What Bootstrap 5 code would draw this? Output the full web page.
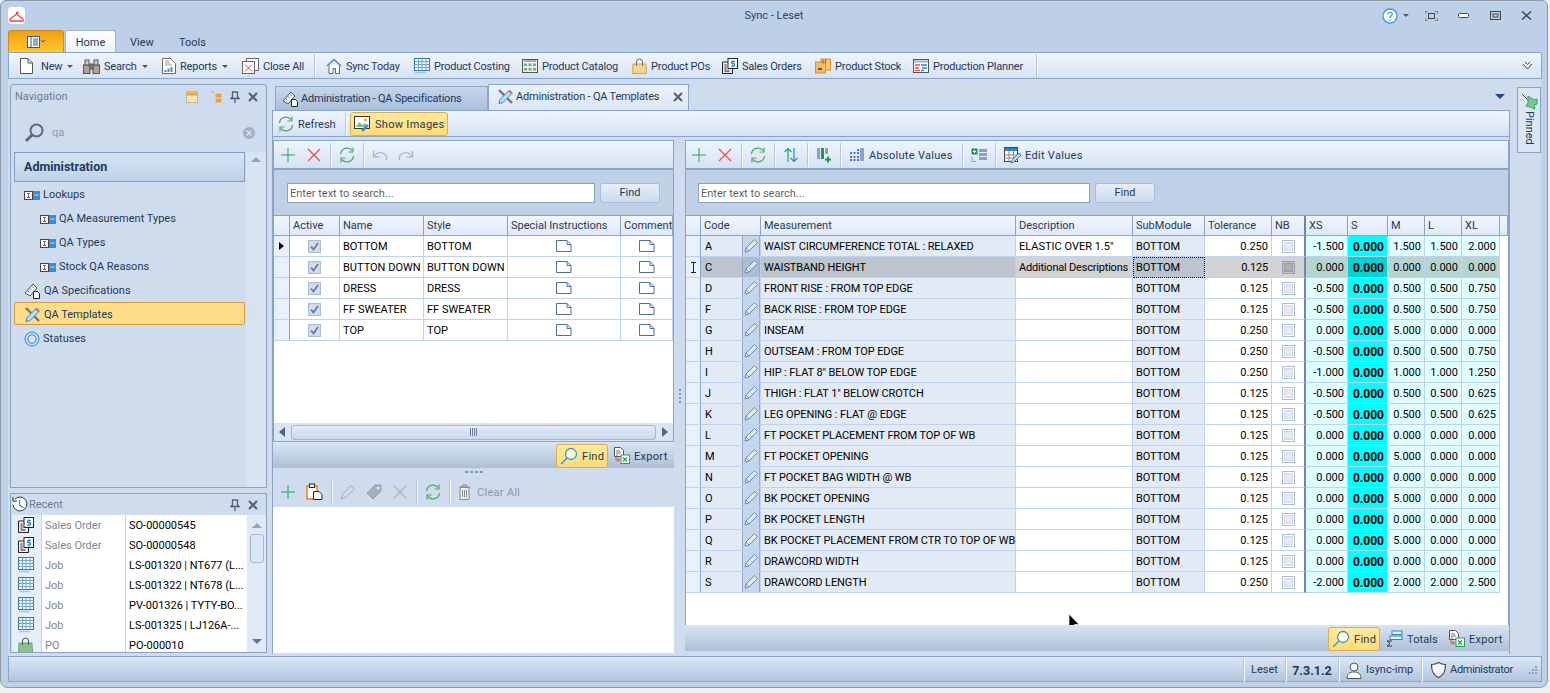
<!DOCTYPE html>
<html lang="en"><head><meta charset="utf-8"><title>Sync - Leset</title>
<link href="https://cdn.jsdelivr.net/npm/bootstrap@5.3.0/dist/css/bootstrap.min.css" rel="stylesheet">
<style>
html,body{margin:0;height:693px;overflow:hidden;background:#efefef}
body{font:11px/1.2 Roboto,"Noto Sans","Liberation Sans",sans-serif;color:#1e395b}
svg{flex:none;display:block}
.appwin{width:1548px;height:688px;background:#bed0e7;border:1px solid #8d99a8;border-radius:6px 6px 8px 8px;position:relative;overflow:hidden}
.titlerow{height:29px;position:relative}
.apptitle{width:100%;text-align:center;padding-top:8px;color:#2c4468}
.applogo{position:absolute;left:7px;top:6px;width:17px;height:17px;background:#fff;border-radius:4px}
.winctl{position:absolute;right:15px;top:0;height:29px}
.g4{margin-left:4px}.g16{margin-left:16px}.g20{margin-left:20px}.g21{margin-left:21px}
.tabrow{height:22px;padding-left:7px}
.appbtn{width:56px;height:22px;background:linear-gradient(#f29f12,#ffc92e);border:1px solid #d88a10;border-bottom:0;border-radius:3px 3px 0 0}
.rtab{height:22px;line-height:26px;color:#1e395b}
.rtab-on{width:51px;text-align:center;background:linear-gradient(#fff,#edf3fc);border:1px solid #9db4d3;border-bottom:0;border-radius:3px 3px 0 0;margin-left:1px;line-height:23px}
.rtab-v{width:49px;margin-left:14px}
.ribbon{height:27px;width:1534px;margin-left:7px;border:1px solid #8aa4c6;border-radius:2px 2px 0 0;background:linear-gradient(#f0f5fd,#d6e2f2);padding-left:11px}
.rbi{height:25px;white-space:nowrap;padding-top:1px;letter-spacing:-.2px}
.rbi span:not(.caret1){padding-top:2px}
.rbi svg{margin-right:4px}
.rw1{width:63px}.rw2{width:79px}.rw3{width:80px}.rw4{width:72px}.rw5{width:88px}.rw6{width:108px}.rw7{width:110px}.rw8{width:90px}.rw9{width:93px}.rw10{width:98px}.rw11{width:123px}
.caret1{width:0;height:0;border:3px solid transparent;border-top:3px solid #555;border-bottom:0;margin-left:5px}
.vsep{width:1px;height:24px;background:#b4c5dd;box-shadow:1px 0 #f4f8fe}
.sepr{margin-right:11px}
.band{height:577px;width:1533px;margin-left:7px;background:#cfdcee}
.leftcol{width:257px;margin-left:2px;padding-top:5px}
.nav-pane{height:404px;border:1px solid #8ba2c1;border-radius:3px 3px 0 0;background:#cfdcee;position:relative}
.panehd{height:22px;padding:1px 4px 0}
.panehd-r{height:21px;padding:0 4px 0 1px}
.panehd-t{color:#6c7c93}
.navbody{width:235px;padding-left:3px}
.navsearch{height:45px;padding:6px 0 0 10px;width:241px;position:relative;z-index:2}
.navgroup{height:30px;width:231px;border:1px solid #7f9fc6;background:linear-gradient(#d5e3f3,#bdd2ea);font-size:12.5px;font-weight:700;line-height:28px;padding-left:9px;color:#1e395b}
.navitem{height:24px;width:231px;padding:2px 0 0 10px;white-space:nowrap}
.navitem svg{margin-right:3px}
.navsub{padding-left:26px}
.navitem-on{background:#fedd88;border:1px solid #d89a3e;border-radius:2px;height:23px;margin:0 0 1px;padding-left:9px}
.vscroll{position:absolute;right:0;top:67px;bottom:0;width:20px;background:#d9e4f2;padding-top:5px}
.arrowup{width:0;height:0;border:5px solid transparent;border-bottom:5px solid #8ea3bf;border-top:0}
.arrowdn{width:0;height:0;border:5px solid transparent;border-top:5px solid #5f7593;border-bottom:0}
.rec-pane{height:160px;margin-top:5px;border:1px solid #8ba2c1;background:#cfdcee;overflow:hidden;position:relative}
.rec-grid{width:235px;margin-left:1px;background:#fff;height:138px;overflow:hidden}
.rec-row{height:20px;line-height:22px;white-space:nowrap;overflow:hidden}
.rec-i{width:30px;background:#e6eef9;border-right:1px solid #c2d3eb;height:20px;padding:2px 0 0 6px}
.rec-t{width:84px;color:#7e8793;border-right:1px solid #c2d3eb;padding-left:3px}
.rec-v{width:120px;color:#000;padding-left:3px;overflow:hidden}
.recscroll{position:absolute;right:0;top:21px;bottom:0;width:19px;background:#e0e9f5}
.thumb1{width:14px;height:29px;margin:6px auto 0;border:1px solid #9fb9da;border-radius:3px;background:#dbe7f6}
.centercol{width:1238px;margin-left:5px;padding-top:5px}
.doctabs{height:26px;position:relative}
.dtab{height:24px;width:213px;margin:2px 0 0 3px;background:linear-gradient(#c6d6ea,#a8bfdc);border:1px solid #8ba6c8;border-bottom:0;padding:0 0 0 6px;white-space:nowrap;letter-spacing:-.2px}
.dtab svg{margin-right:2px}
.dtab-on{height:26px;width:201px;background:linear-gradient(#eaf1fb,#dbe6f5);margin:0;padding:0 0 1px 8px}
.dtab-on .xbtn{margin-left:auto;margin-right:5px}
.dmenu{position:absolute;right:5px;top:10px;width:0;height:0;border:5px solid transparent;border-top:5px solid #23439b;border-bottom:0}
.docbox{height:544px;border:1px solid #8aa4c6;border-bottom:0}
.tb-main{height:26px;border-bottom:1px solid #8aa4c6;background:linear-gradient(#f0f5fd,#d6e2f2);padding:1px 0 0 5px}
.tbtxt{white-space:nowrap;padding-top:2px;letter-spacing:.3px}
.wref{width:39px;letter-spacing:0}.wabs{width:85px}.wexp{width:34px}.wtot{width:31px;letter-spacing:.1px}
.hlbtn{background:linear-gradient(#ffeaa0,#ffdc72);border:1px solid #dcae50;border-radius:3px;height:24px;white-space:nowrap;padding:0 3px;color:#1e395b}
.hlimg{width:98px;margin-left:4px}
.hlfind{width:52px}
.g5{margin-left:5px}.g6{margin-left:6px}.g7{margin-left:7px}.g10{margin-left:10px}
.panels{height:518px;padding-top:3px}
.lpane{width:401px;flex:none}
.rpane{width:824px;flex:none}
.gsplit{width:11px;flex:none;padding-top:249px}
.dotv{width:2px;height:2px;background:#7f97b8;margin:0 auto 2px}
.tb-sub{height:30px;background:linear-gradient(#eef4fd,#d5e2f3);border:1px solid #8aa4c6;border-bottom:2px solid #8aa4c6;padding:1px 0 0 6px}
.tb-r{padding-left:5px}
.tsep{width:1px;height:24px;margin-left:8px;background:#b7c7de;box-shadow:1px 0 #f4f8fe}
.searchbox{height:45px;padding-top:1px;background:#bfd0e7;border-left:1px solid #8aa4c6;border-right:1px solid #8aa4c6}
.qinput.form-control{height:20px;min-height:20px;padding:0 2px;border:1px solid #8ba2c1;border-radius:0;font-size:11px;line-height:18px;color:#7c8794;background:#fff}
.qinput-l{width:308px;margin-left:13px}
.qinput-r{width:392px;margin-left:12px}
.qfind.btn{width:60px;height:20px;padding:0;margin-left:5px;font-size:11px;line-height:18px;color:#1e395b;border:1px solid #a9bcd6;border-radius:3px;background:linear-gradient(#e7effa,#ccdaed)}
.gridwrap{background:#fff;border-left:1px solid #8aa4c6;border-right:1px solid #8aa4c6;border-top:1px solid #8aa4c6;position:relative;overflow:hidden}
.qgrid.table{table-layout:fixed;margin:0;--bs-table-bg:transparent;border-collapse:separate;border-spacing:0;font-size:11px}
.qgrid-l.table{width:399px}
.qgrid-r.table{width:822px}
.qgrid.table th,.qgrid.table td{padding:2px 3px 0;height:21px;line-height:18px;white-space:nowrap;overflow:hidden;border:0;border-right:1px solid #bdd3f1;border-bottom:1px solid #bdd3f1;color:#000;font-weight:400;box-shadow:none;vertical-align:middle}
.qgrid.table th{padding:0 3px;height:20px;line-height:19px;background:linear-gradient(#f2f6fd,#dfe9f7);color:#1e395b;border-right:1px solid #8aa4c6;border-bottom:1px solid #8aa4c6}
.qgrid.table td.ind{background:#e8f0fb;border-right:1px solid #8aa4c6;padding:0}
.qgrid.table td.ro{background:#e2eaf5;letter-spacing:-.1px}
.qgrid.table td.num{text-align:right}
.qgrid.table td.ctr{padding:0}
.qgrid.table td.sz{background:#e0fdff;text-align:right}
.qgrid.table td.szs{background:#0ff;text-align:right;font-weight:700;font-size:12px}
.qgrid.table td.nbc{border-right:2px solid #6f87a8;padding:0}
.qgrid.table th.nbh{border-right:2px solid #6f87a8}
.qgrid.table td.cod{padding:0;background:#e2eaf5}
.qgrid.table td.fill{border:0;background:#fff}
.qgrid.table tr.sel td.ro,.qgrid.table tr.sel td.cod{background:#bcc4ce}
.qgrid.table tr.sel td.ed{background:#d3d3d3;letter-spacing:-.2px}
.qgrid.table tr.sel td.sz{background:#b8d4d0}
.qgrid.table tr.sel td.szs{background:#00d3d3}
.qgrid.table td.foc{outline:1px dotted #000;outline-offset:-1px}
.codetx{padding:2px 0 0 4px}
.penbtn{width:18px;height:20px;background:#c7d5e8;border-left:1px solid #93aac8;border-right:1px solid #93aac8}
.sel .penbtn{background:#aebccd}
.c0{width:16px}.c1{width:50px}.c2{width:84px}.c3{width:84px}.c4{width:113px}.c5{width:52px}
.d0{width:15px}.d1{width:60px}.d2{width:255px}.d3{width:117px}.d4{width:72px}.d5{width:67px}.d6{width:34px}.d7{width:42px}.d8{width:40px}.d9{width:37px}.d10{width:37px}.d11{width:38px}.d12{width:8px}
.lgrid{height:208px}
.hscroll{height:19px;background:#d9e5f4;border:1px solid #8aa4c6;border-top:0;padding:0 5px}
.hthumb{height:15px;flex:1;margin:0 6px;border:1px solid #9fb9da;border-radius:3px;background:linear-gradient(#e3edf9,#c8d8ec)}
.tinyarrowl{width:0;height:0;border:5px solid transparent;border-right:6px solid #4e6588;border-left:0}
.tinyarrowr{width:0;height:0;border:5px solid transparent;border-left:6px solid #4e6588;border-right:0}
.ftbar{height:26px;background:linear-gradient(#d9e5f4,#aebfd5);padding:1px 6px 0 0}
.hsplit{height:8px}
.doth{width:3px;height:2px;background:#7f97b8;margin:0 1px}
.tb-low{height:31px;padding-left:7px}
.lowwhite{height:146px;background:#fff}
.rgrid{height:410px}
.graytx{color:#8b98a8}
.railtab{width:24px;height:66px;margin:8px 0 0 7px;border:1px solid #8aa4c6;background:#dbe6f5;padding-top:5px}
.vtxt{writing-mode:vertical-rl;margin-top:1px}
.statusbar{height:26px;width:1534px;margin-left:7px;border:1px solid #8aa4c6;background:linear-gradient(#dce7f5,#b3c5dc);padding-top:2px}
.stt{white-space:nowrap}
.st1{width:41px;text-align:center}.st2{width:52px;text-align:center;font-size:12.5px}.st3{width:82px;padding-left:7px}.st4{width:119px;padding-left:9px;letter-spacing:-.3px}
.mousep{left:382px;top:397px}
</style></head><body>
<svg width="0" height="0" class="position-absolute"><defs>
<symbol id="i-plus" viewBox="0 0 16 16"><path d="M8 1v14M1 8h14" stroke="#1fa84f" fill="none"/></symbol>
<symbol id="i-x" viewBox="0 0 16 16"><path d="M2 2l12 12M14 2L2 14" stroke="#ee4b4b" stroke-width="1.2" fill="none"/></symbol>
<symbol id="i-xg" viewBox="0 0 16 16"><path d="M2 2l12 12M14 2L2 14" stroke="#a9b1bb" stroke-width="1.1" fill="none"/></symbol>
<symbol id="i-ref" viewBox="0 0 16 16"><path d="M1.500 7A6.500 6.500 0 0 1 13 3.500M14.500 9A6.500 6.500 0 0 1 3 12.500" stroke="#4fa85e" stroke-width="1.3" fill="none"/><path d="M14 .5v4.500h-4.500M2 15.500V11h4.500" stroke="#4fa85e" stroke-width="1.200" fill="none"/></symbol>
<symbol id="i-undo" viewBox="0 0 16 16"><path d="M1.500 4v6h6M2 9.500C4 5 12 4 14.500 9.500V13" stroke="#a6afba" stroke-width="1.200" fill="none"/></symbol>
<symbol id="i-redo" viewBox="0 0 16 16"><path d="M14.500 4v6h-6M14 9.500C12 5 4 4 1.500 9.500V13" stroke="#a6afba" stroke-width="1.200" fill="none"/></symbol>
<symbol id="i-note" viewBox="0 0 16 12"><path d="M.5 .5h10.500l4 4v7H.5z" fill="#fff" stroke="#4a6ea8"/><path d="M11 .5v4h4" fill="none" stroke="#4a6ea8"/></symbol>
<symbol id="i-pen" viewBox="0 0 16 16"><path d="M2 14l1-4 8.500-8.500 3 3L6 13z" fill="#dfe9f6" stroke="#5f8fc6"/><path d="M3 10l3 3" stroke="#5f8fc6"/></symbol>
<symbol id="i-peng" viewBox="0 0 16 16"><path d="M1 15l1.500-4.500 8.500-9 3.500 3.500-9 8.500z" fill="#d6dbe2" stroke="#a3abb6"/></symbol>
<symbol id="i-tag" viewBox="0 0 16 16"><path d="M1 9l8-8h6v6l-8 8z" fill="#a9b0ba" stroke="#969ea9"/><circle cx="12" cy="4" r="1.300" fill="#e6ebf2"/></symbol>
<symbol id="i-chk" viewBox="0 0 13 13"><rect x=".5" y=".5" width="12" height="12" fill="#dce4ef" stroke="#a9bdd8"/><rect x="1.500" y="1.500" width="10" height="10" fill="#d5dde8" stroke="#c6d2e2" stroke-width=".5"/><path d="M3 6.500l2.500 3L10 3" fill="none" stroke="#5f7fa5" stroke-width="1.800"/></symbol>
<symbol id="i-unc" viewBox="0 0 13 13"><rect x=".5" y=".5" width="12" height="12" fill="#fff" stroke="#a9bdd8"/><rect x="2.500" y="2.500" width="8" height="8" fill="#e7e9ec" stroke="#d5d9df"/></symbol>
<symbol id="i-uns" viewBox="0 0 13 13"><rect x=".5" y=".5" width="12" height="12" fill="#c4c4c4" stroke="#8ea2bd"/><rect x="2.500" y="2.500" width="8" height="8" fill="#adadad" stroke="#9c9c9c"/></symbol>
<symbol id="i-x2" viewBox="0 0 10 10"><path d="M1 1l8 8M9 1L1 9" stroke="#4e5f78" stroke-width="2" fill="none"/></symbol>
<symbol id="i-lk" viewBox="0 0 16 9"><rect x=".5" y=".5" width="8" height="8" fill="#f4f4f4" stroke="#444"/><path d="M3 2.500h3M4.500 2.500v4M3 6.500h3" stroke="#555" stroke-width=".8" fill="none"/><rect x="9" y="0" width="7" height="9" fill="#3a8fd0"/><path d="M10.500 3l2 2 2-2" stroke="#dcecf8" fill="none"/></symbol>
<symbol id="i-qas" viewBox="0 0 17 16"><path d="M1 10L9 1l4 4-7 8z" fill="#e9edf3" stroke="#4d5866"/><path d="M4 8l1 1M6 5.500l1 1M8.500 3.500l1 1" stroke="#4d5866"/><path d="M9.500 8.500h4l2 2v5h-6z" fill="#fff" stroke="#222"/></symbol>
<symbol id="i-qat" viewBox="0 0 17 16"><path d="M2 1l13 13" stroke="#777" stroke-width="2.400"/><path d="M2 14.500l1-4L12 1.500l3 3-9 9z" fill="#bcdcf5" stroke="#3a87c9"/><path d="M12 1.500l3 3" stroke="#e9555f" stroke-width="1.800"/></symbol>
<symbol id="i-stat" viewBox="0 0 16 16"><circle cx="8" cy="8" r="7" fill="#bfe0f7" stroke="#2b86c8"/><circle cx="8" cy="8" r="4.200" fill="#d8e4f2" stroke="#2b86c8"/></symbol>
<symbol id="i-mag" viewBox="0 0 20 20"><circle cx="12.500" cy="7.500" r="6" fill="none" stroke="#5a6b80" stroke-width="2"/><path d="M8 12l-6 6" stroke="#5a6b80" stroke-width="3"/></symbol>
<symbol id="i-mag2" viewBox="0 0 18 18"><circle cx="11" cy="7" r="5.500" fill="#fff9d8" stroke="#2b9bdc" stroke-width="1.300"/><path d="M7 11l-6 6" stroke="#2b9bdc" stroke-width="1.500"/></symbol>
<symbol id="i-exp" viewBox="0 0 17 17"><path d="M1.500 .5h6l3 3v6h-9z" fill="#fff" stroke="#555"/><path d="M3 4h4M3 6h5M3 8h2" stroke="#777"/><path d="M3 10v3h3M4.500 15l2-2-2-2" stroke="#e24b4b" fill="none"/><rect x="8" y="8" width="8.500" height="8.500" fill="#fff" stroke="#22a350"/><path d="M10 10.500l4 4M14 10.500l-4 4" stroke="#22a350" stroke-width="1.300"/></symbol>
<symbol id="i-tot" viewBox="0 0 17 17"><rect x="6" y="1" width="10" height="3.500" fill="#e6f2fc" stroke="#2b86c8"/><rect x="4" y="6" width="12" height="3.500" fill="#e6f2fc" stroke="#2b86c8"/><path d="M6 11H1l3 2.500L1 16h5" fill="none" stroke="#333"/></symbol>
<symbol id="i-new" viewBox="0 0 13 16"><path d="M.5 .5h7.500l4.500 4.500v10.500H.5z" fill="#fff" stroke="#555"/><path d="M8 .5V5h4.500" fill="none" stroke="#555"/></symbol>
<symbol id="i-bin" viewBox="0 0 17 15"><rect x=".5" y="6" width="6.500" height="8.500" fill="#aaa397" stroke="#555"/><rect x="10" y="6" width="6.500" height="8.500" fill="#aaa397" stroke="#555"/><rect x="2" y="1" width="4" height="5" fill="#cfcabf" stroke="#555"/><rect x="11" y="1" width="4" height="5" fill="#cfcabf" stroke="#555"/><rect x="7" y="5" width="3" height="5" fill="#8b857a" stroke="#555"/></symbol>
<symbol id="i-rep" viewBox="0 0 14 16"><path d="M.5 .5h8l5 5v10H.5z" fill="#fff" stroke="#666"/><path d="M3 3h4M3 5h5M3 7h7" stroke="#999"/><path d="M3.500 14v-2M6.500 14v-3.500M9.500 14V9" stroke="#3a8fd0" stroke-width="2"/></symbol>
<symbol id="i-cls" viewBox="0 0 17 16"><rect x="4.500" y=".5" width="12" height="12" fill="#fff" stroke="#666"/><rect x=".5" y="3.500" width="12" height="12" fill="#fff" stroke="#666"/><path d="M3 6.500l7 7M10 6.500l-7 7" stroke="#e24b4b"/></symbol>
<symbol id="i-home" viewBox="0 0 16 16"><path d="M1 8l7-6.500L15 8" fill="none" stroke="#3a8fd0" stroke-width="1.500"/><path d="M3 7.500v8h4v-5h2.500v5h4v-8" fill="#fff" stroke="#666"/></symbol>
<symbol id="i-grid" viewBox="0 0 16 16"><rect x=".5" y=".5" width="15" height="12" fill="#f3f8fd" stroke="#2f78b0"/><path d="M.5 3.500h15M.5 6.500h15M.5 9.500h15M4.500 .5v12M8 .5v12M12 .5v12" stroke="#6ea4cf"/><path d="M1 14.500h11" stroke="#9cc6e6" stroke-width="1.500"/></symbol>
<symbol id="i-cat" viewBox="0 0 16 16"><rect x=".5" y="1.500" width="15" height="13" fill="#eef0ef" stroke="#555"/><path d="M2 3h12" stroke="#999" stroke-width="1.500"/><path d="M2 5.500h3v2.500H2zM6.500 5.500h3v2.500h-3zM11 5.500h3v2.500h-3zM2 10h3v2.500H2zM6.500 10h3v2.500h-3zM11 10h3v2.500h-3z" fill="#6fae86"/></symbol>
<symbol id="i-bag" viewBox="0 0 15 16"><path d="M1 6h13l.500 9.500H.5z" fill="#f0d68c" stroke="#c4a965"/><path d="M4.500 8V4a3 3 0 0 1 6 0v4" fill="none" stroke="#7d6b3e"/></symbol>
<symbol id="i-bagg" viewBox="0 0 15 16"><path d="M1 6h13l.500 10H.5z" fill="#8cc08f" stroke="#6fa274"/><path d="M4.500 8V4a3 3 0 0 1 6 0v4" fill="none" stroke="#46604c"/></symbol>
<symbol id="i-so" viewBox="0 0 16 16"><rect x="6" y=".5" width="9.500" height="10" fill="#fff" stroke="#222"/><path d="M.5 4h5.500M.5 4v11.500h10v-5" fill="none" stroke="#222"/><path d="M2.500 7h2M2.500 9h2M2.500 11h2M2.500 13h5" stroke="#222"/><path d="M13 3.500h-3.500v2h3v2.500H9M11 2v7.500" stroke="#2b86c8" fill="none"/></symbol>
<symbol id="i-stock" viewBox="0 0 16 16"><rect x="6" y="1" width="9.500" height="11" fill="#f7c878" stroke="#e08e2a"/><rect x=".5" y="4" width="10" height="11" fill="#f4bd62" stroke="#e08e2a"/><path d="M3 11h4" stroke="#555" stroke-width="2"/><path d="M8 1.500v4M10.500 1.500v4" stroke="#666"/></symbol>
<symbol id="i-plan" viewBox="0 0 16 16"><rect x=".5" y="1.500" width="15" height="13" fill="#fff" stroke="#555"/><path d="M1 3.500h14" stroke="#8db6d8" stroke-width="2"/><path d="M2 7h5M2 10h4M2 12.500h5" stroke="#e24b4b" stroke-width="1.500"/><path d="M8 7h6M9 10h5M8 12.500h3" stroke="#2b86c8" stroke-width="1.500"/></symbol>
<symbol id="i-img" viewBox="0 0 17 16"><rect x=".5" y=".5" width="15" height="12" fill="#fff" stroke="#333"/><path d="M1.500 11l4-5 3 3 2-2 4 4z" fill="#7cc08d"/><circle cx="11.500" cy="4" r="1.500" fill="#f2a13b"/><path d="M8 15l6-6" stroke="#3a8fd0" stroke-width="2.500"/></symbol>
<symbol id="i-updn" viewBox="0 0 16 16"><path d="M5 15V1.500M1.500 5L5 1.500 8.500 5" fill="none" stroke="#22a36a" stroke-width="1.200"/><path d="M11 1v13.500M7.500 11l3.500 3.500 3.500-3.500" fill="none" stroke="#2b86c8" stroke-width="1.200"/></symbol>
<symbol id="i-col" viewBox="0 0 16 16"><path d="M1 1h3v11H1zM9 1h3v6H9z" fill="#8ba2c6"/><path d="M5 1h3v11H5z" fill="#1b9a4b"/><path d="M9 12.500h6M12 9.500v6" stroke="#1b9a4b" stroke-width="2"/></symbol>
<symbol id="i-abs" viewBox="0 0 16 16"><path d="M11 1h4v13h-4z" fill="#8ba2c6"/><path d="M1 5h2v2H1zM1 9h2v2H1zM1 12h2v2H1zM4.500 5h2v2h-2zM4.500 9h2v2h-2zM4.500 12h2v2h-2zM8 2h2v2H8zM8 5h2v2H8zM8 9h2v2H8zM8 12h2v2H8z" fill="#4b78c6"/></symbol>
<symbol id="i-rw" viewBox="0 0 16 16"><rect x=".5" y="1.500" width="6" height="6" fill="#1b9a4b"/><path d="M3.500 3v3M2 4.500h3" stroke="#fff"/><path d="M8 2h8v3H8zM8 6h8v3H8zM8 10h8v3H8z" fill="#8ba2c6"/><path d="M1 9.500v5h4" fill="none" stroke="#8ba2c6"/></symbol>
<symbol id="i-edit" viewBox="0 0 17 17"><rect x=".5" y=".5" width="13" height="14" fill="#fff" stroke="#444"/><path d="M1 2.500h12" stroke="#2b86c8" stroke-width="3"/><path d="M.5 8h13M.5 11h13M5 4v10.500M9.500 4v10.500" stroke="#888"/><path d="M7 16l1-3 7-7 2 2-7 7z" fill="#bcdcf5" stroke="#2b86c8"/></symbol>
<symbol id="i-paste" viewBox="0 0 17 17"><rect x="1" y="3" width="10" height="13" fill="#fff" stroke="#ea7d21" stroke-width="1.500"/><rect x="3.500" y="1" width="5" height="3.500" fill="#fff" stroke="#222"/><path d="M7.500 8.500h5.500l3 3v5H7.500z" fill="#fff" stroke="#222"/></symbol>
<symbol id="i-trash" viewBox="0 0 13 16"><path d="M1 3h11M4.500 3V1h4v2" fill="none" stroke="#888"/><path d="M2 3.500h9v12H2z" fill="#eef1f5" stroke="#888"/><path d="M4.500 6v7M6.500 6v7M8.500 6v7" stroke="#888"/></symbol>
<symbol id="i-user" viewBox="0 0 16 17"><circle cx="8" cy="5" r="4" fill="#fff" stroke="#555"/><path d="M1 16.500c0-5 3-6.500 7-6.500s7 1.500 7 6.500z" fill="#fff" stroke="#555"/></symbol>
<symbol id="i-shield" viewBox="0 0 15 16"><path d="M7.500 .5C5 2 3 2.500 .5 2.500c0 6 1 10.500 7 13 6-2.500 7-7 7-13-2.500 0-4.500-.5-7-2z" fill="#f4f6f9" stroke="#444" stroke-width="1.200"/></symbol>
<symbol id="i-clock" viewBox="0 0 17 17"><path d="M3 3a7 7 0 1 1-2 6" fill="#fff" stroke="#333"/><path d="M1 1v4h4" fill="none" stroke="#333"/><path d="M7.500 4v5l4 3" fill="none" stroke="#2b86c8" stroke-width="1.200"/></symbol>
<symbol id="i-pin" viewBox="0 0 10 12"><path d="M2.500 1h5v5l1.500 1.500H1L2.500 6zM5 7.500V12" fill="none" stroke="#4e5f78" stroke-width="1.300"/></symbol>
<symbol id="i-pingreen" viewBox="0 0 17 17"><path d="M1 1l7 7" stroke="#444"/><path d="M7 3l6 4 3-1 0 5-3 1 1 4-5-2-4-1 2-3z" fill="#74cc92" stroke="#3fa064"/></symbol>
</defs></svg>

<div class="appwin">
 <div class="titlerow">
  <div class="applogo d-flex align-items-center justify-content-center"><svg width="15" height="12" viewBox="0 0 15 12"><path d="M7.500 4C7 2 9 1.500 9 3L1 9v2h13V9L7.500 4" fill="none" stroke="#e8494f" stroke-width="1.300"/></svg></div>
  <div class="apptitle">Sync - Leset</div>
  <div class="winctl d-flex align-items-center">
   <svg width="16" height="16" viewBox="0 0 16 16"><circle cx="8" cy="8" r="7" fill="#fff" stroke="#3a9ae0" stroke-width="1.300"/><path d="M5.800 6.200C6 3.500 10.500 3.800 10.200 6.300 10 8 8 8 8 10M8 11.500v1.500" fill="none" stroke="#3a9ae0" stroke-width="1.300"/></svg>
   <span class="caret1 g4"></span>
   <svg class="g16" width="13" height="10" viewBox="0 0 13 10"><path d="M0 3V0h3M10 0h3v3M13 7v3h-3M3 10H0V7" fill="none" stroke="#555"/><rect x="3.500" y="2.500" width="6" height="5" fill="none" stroke="#444"/></svg>
   <svg class="g20" width="11" height="5" viewBox="0 0 11 5"><rect x=".5" y=".5" width="10" height="4" rx="1" fill="#fff" stroke="#444"/></svg>
   <svg class="g21" width="11" height="9" viewBox="0 0 11 9"><rect x=".5" y=".5" width="10" height="8" fill="none" stroke="#444"/><rect x="3" y="3" width="5" height="3" fill="none" stroke="#444"/></svg>
   <svg class="g20" width="11" height="9" viewBox="0 0 11 9"><path d="M1 .5l9 8M10 .5l-9 8" stroke="#444" stroke-width="1.500"/></svg>
  </div>
 </div>
 <div class="tabrow d-flex">
  <div class="appbtn d-flex align-items-center justify-content-center"><svg width="18" height="12" viewBox="0 0 18 12"><rect x=".5" y=".5" width="12" height="11" fill="#fff" stroke="#2b55a8"/><path d="M4 1v10M6 3h5M6 5h5M6 7h5M6 9h5" stroke="#2b55a8"/><path d="M14 4l2 2 2-2" fill="none" stroke="#2b55a8"/></svg></div>
  <div class="rtab rtab-on">Home</div>
  <div class="rtab rtab-v">View</div>
  <div class="rtab">Tools</div>
 </div>
 <div class="ribbon d-flex align-items-center">
  <div class="rbi rw1 d-flex align-items-center"><svg class="me-2" width="13" height="16"><use href="#i-new"/></svg><span>New</span><span class="caret1"></span></div>
  <div class="rbi rw2 d-flex align-items-center"><svg width="17" height="15"><use href="#i-bin"/></svg><span>Search</span><span class="caret1"></span></div>
  <div class="rbi rw3 d-flex align-items-center"><svg width="14" height="16"><use href="#i-rep"/></svg><span>Reports</span><span class="caret1"></span></div>
  <div class="rbi rw4 d-flex align-items-center"><svg width="17" height="16"><use href="#i-cls"/></svg><span>Close All</span></div>
  <span class="vsep sepr"></span>
  <div class="rbi rw5 d-flex align-items-center"><svg width="16" height="16"><use href="#i-home"/></svg><span>Sync Today</span></div>
  <div class="rbi rw6 d-flex align-items-center"><svg width="16" height="16"><use href="#i-grid"/></svg><span>Product Costing</span></div>
  <div class="rbi rw7 d-flex align-items-center"><svg width="16" height="16"><use href="#i-cat"/></svg><span>Product Catalog</span></div>
  <div class="rbi rw8 d-flex align-items-center"><svg width="15" height="16"><use href="#i-bag"/></svg><span>Product POs</span></div>
  <div class="rbi rw9 d-flex align-items-center"><svg width="16" height="16"><use href="#i-so"/></svg><span>Sales Orders</span></div>
  <div class="rbi rw10 d-flex align-items-center"><svg width="16" height="16"><use href="#i-stock"/></svg><span>Product Stock</span></div>
  <div class="rbi rw11 d-flex align-items-center"><svg width="16" height="16"><use href="#i-plan"/></svg><span>Production Planner</span></div>
  <span class="vsep"></span>
  <svg class="ms-auto me-2" width="11" height="10" viewBox="0 0 11 10"><path d="M1 3l4.500 5L10 3M3 1l2.500 2.500L8 1" fill="none" stroke="#444"/></svg>
 </div>
 <div class="band d-flex">
  <div class="leftcol">
   <div class="nav-pane">
    <div class="vscroll d-flex justify-content-center"><span class="arrowup"></span></div>
    <div class="panehd d-flex align-items-center"><span class="panehd-t me-auto">Navigation</span>
     <svg class="me-2" width="12" height="12" viewBox="0 0 12 12"><rect x=".5" y=".5" width="11" height="11" fill="#fbe3b0" stroke="#8a8a8a" stroke-dasharray="1 1"/><path d="M0 3h12" stroke="#f0a23a" stroke-width="3"/></svg>
     <svg class="ms-1 me-2" width="12" height="12" viewBox="0 0 12 12"><path d="M1 1h3M6 3h5v3H6zM6 8h5v3H6z" fill="#f0a23a" stroke="#f0a23a"/></svg>
     <svg class="me-2" width="10" height="12"><use href="#i-pin"/></svg>
     <svg width="10" height="10" class="me-1"><use href="#i-x2"/></svg></div>
    <div class="navbody">
     <div class="navsearch d-flex align-items-center"><svg class="me-2" width="20" height="20"><use href="#i-mag"/></svg><span class="graytx">qa</span><svg class="ms-auto" width="12" height="12" viewBox="0 0 12 12"><circle cx="6" cy="6" r="6" fill="#9fb0c7"/><path d="M3.500 3.500l5 5M8.500 3.500l-5 5" stroke="#dfe8f4" stroke-width="1.200"/></svg></div>
     <div class="navgroup">Administration</div>
     <div class="navitem d-flex align-items-center"><svg width="16" height="9"><use href="#i-lk"/></svg>Lookups</div>
     <div class="navitem navsub d-flex align-items-center"><svg width="16" height="9"><use href="#i-lk"/></svg>QA Measurement Types</div>
     <div class="navitem navsub d-flex align-items-center"><svg width="16" height="9"><use href="#i-lk"/></svg>QA Types</div>
     <div class="navitem navsub d-flex align-items-center"><svg width="16" height="9"><use href="#i-lk"/></svg>Stock QA Reasons</div>
     <div class="navitem d-flex align-items-center"><svg width="17" height="16"><use href="#i-qas"/></svg>QA Specifications</div>
     <div class="navitem navitem-on d-flex align-items-center"><svg width="17" height="16"><use href="#i-qat"/></svg>QA Templates</div>
     <div class="navitem d-flex align-items-center"><svg width="16" height="16"><use href="#i-stat"/></svg>Statuses</div>
    </div>
   </div>
   <div class="rec-pane">
    <div class="panehd-r d-flex align-items-center"><svg width="17" height="17"><use href="#i-clock"/></svg><span class="panehd-t me-auto">Recent</span><svg class="me-2" width="10" height="12"><use href="#i-pin"/></svg><svg class="me-1" width="10" height="10"><use href="#i-x2"/></svg></div>
    <div class="rec-grid">
     <div class="rec-row d-flex"><div class="rec-i"><svg width="16" height="16"><use href="#i-so"/></svg></div><div class="rec-t">Sales Order</div><div class="rec-v">SO-00000545</div></div>
     <div class="rec-row d-flex"><div class="rec-i"><svg width="16" height="16"><use href="#i-so"/></svg></div><div class="rec-t">Sales Order</div><div class="rec-v">SO-00000548</div></div>
     <div class="rec-row d-flex"><div class="rec-i"><svg width="16" height="16"><use href="#i-grid"/></svg></div><div class="rec-t">Job</div><div class="rec-v">LS-001320 | NT677 (L...</div></div>
     <div class="rec-row d-flex"><div class="rec-i"><svg width="16" height="16"><use href="#i-grid"/></svg></div><div class="rec-t">Job</div><div class="rec-v">LS-001322 | NT678 (L...</div></div>
     <div class="rec-row d-flex"><div class="rec-i"><svg width="16" height="16"><use href="#i-grid"/></svg></div><div class="rec-t">Job</div><div class="rec-v">PV-001326 | TYTY-BO...</div></div>
     <div class="rec-row d-flex"><div class="rec-i"><svg width="16" height="16"><use href="#i-grid"/></svg></div><div class="rec-t">Job</div><div class="rec-v">LS-001325 | LJ126A-...</div></div>
     <div class="rec-row d-flex"><div class="rec-i"><svg width="15" height="16"><use href="#i-bagg"/></svg></div><div class="rec-t">PO</div><div class="rec-v">PO-000010</div></div>
    </div>
    <div class="recscroll d-flex flex-column align-items-center pt-2"><span class="arrowup"></span><div class="thumb1"></div><span class="arrowdn mt-auto mb-2"></span></div>
   </div>
  </div>
  <div class="centercol">
   <div class="doctabs d-flex">
    <div class="dtab d-flex align-items-center"><svg width="17" height="16"><use href="#i-qas"/></svg>Administration - QA Specifications</div>
    <div class="dtab dtab-on d-flex align-items-center"><svg width="17" height="16"><use href="#i-qat"/></svg>Administration - QA Templates<svg class="xbtn" width="10" height="10"><use href="#i-x2"/></svg></div>
    <span class="dmenu"></span>
   </div>
   <div class="docbox">
    <div class="tb-main d-flex align-items-center">
     <svg width="16" height="16"><use href="#i-ref"/></svg><span class="tbtxt wref ms-1">Refresh</span>
     <span class="tsep"></span>
     <div class="hlbtn hlimg d-flex align-items-center"><svg class="me-1" width="17" height="16"><use href="#i-img"/></svg><span class="tbtxt">Show Images</span></div>
    </div>
    <div class="panels d-flex">
     <div class="lpane">
      <div class="tb-sub d-flex align-items-center">
       <svg width="16" height="16"><use href="#i-plus"/></svg><svg class="g10" width="16" height="16"><use href="#i-x"/></svg><span class="tsep"></span><svg class="ms-2" width="16" height="16"><use href="#i-ref"/></svg><span class="tsep"></span><svg class="ms-2" width="16" height="16"><use href="#i-undo"/></svg><svg class="g10" width="16" height="16"><use href="#i-redo"/></svg>
      </div>
      <div class="searchbox d-flex align-items-center"><input class="form-control qinput qinput-l" placeholder="Enter text to search..."><button class="btn qfind">Find</button></div>
      <div class="gridwrap lgrid">
       <table class="table qgrid qgrid-l"><colgroup><col class="c0"><col class="c1"><col class="c2"><col class="c3"><col class="c4"><col class="c5"></colgroup>
        <thead><tr><th></th><th>Active</th><th>Name</th><th>Style</th><th>Special Instructions</th><th>Comment</th></tr></thead>
        <tbody>
        <tr><td class="ind"><svg class="mx-auto" width="5" height="8" viewBox="0 0 5 8"><path d="M0 0l5 4-5 4z" fill="#000"/></svg></td><td class="ctr"><svg class="mx-auto" width="13" height="13"><use href="#i-chk"/></svg></td><td>BOTTOM</td><td>BOTTOM</td><td class="ctr"><svg class="mx-auto" width="16" height="12"><use href="#i-note"/></svg></td><td class="ctr"><svg class="mx-auto" width="16" height="12"><use href="#i-note"/></svg></td></tr>
        <tr><td class="ind"></td><td class="ctr"><svg class="mx-auto" width="13" height="13"><use href="#i-chk"/></svg></td><td>BUTTON DOWN</td><td>BUTTON DOWN</td><td class="ctr"><svg class="mx-auto" width="16" height="12"><use href="#i-note"/></svg></td><td class="ctr"><svg class="mx-auto" width="16" height="12"><use href="#i-note"/></svg></td></tr>
        <tr><td class="ind"></td><td class="ctr"><svg class="mx-auto" width="13" height="13"><use href="#i-chk"/></svg></td><td>DRESS</td><td>DRESS</td><td class="ctr"><svg class="mx-auto" width="16" height="12"><use href="#i-note"/></svg></td><td class="ctr"><svg class="mx-auto" width="16" height="12"><use href="#i-note"/></svg></td></tr>
        <tr><td class="ind"></td><td class="ctr"><svg class="mx-auto" width="13" height="13"><use href="#i-chk"/></svg></td><td>FF SWEATER</td><td>FF SWEATER</td><td class="ctr"><svg class="mx-auto" width="16" height="12"><use href="#i-note"/></svg></td><td class="ctr"><svg class="mx-auto" width="16" height="12"><use href="#i-note"/></svg></td></tr>
        <tr><td class="ind"></td><td class="ctr"><svg class="mx-auto" width="13" height="13"><use href="#i-chk"/></svg></td><td>TOP</td><td>TOP</td><td class="ctr"><svg class="mx-auto" width="16" height="12"><use href="#i-note"/></svg></td><td class="ctr"><svg class="mx-auto" width="16" height="12"><use href="#i-note"/></svg></td></tr>
        </tbody></table>
      </div>
      <div class="hscroll d-flex align-items-center"><span class="tinyarrowl"></span><div class="hthumb d-flex align-items-center justify-content-center"><svg width="8" height="8" viewBox="0 0 8 8"><path d="M.5 0v8M2.500 0v8M4.500 0v8M6.500 0v8" stroke="#6c7f9a"/></svg></div><span class="tinyarrowr"></span></div>
      <div class="ftbar d-flex align-items-center justify-content-end"><div class="hlbtn hlfind d-flex align-items-center"><svg class="me-1" width="18" height="18"><use href="#i-mag2"/></svg><span class="tbtxt">Find</span></div><svg class="g5" width="17" height="17"><use href="#i-exp"/></svg><span class="tbtxt wexp ms-1">Export</span></div>
      <div class="hsplit d-flex align-items-center justify-content-center"><span class="doth"></span><span class="doth"></span><span class="doth"></span><span class="doth"></span></div>
      <div class="tb-low d-flex align-items-center">
       <svg width="16" height="16"><use href="#i-plus"/></svg><svg class="g10" width="17" height="17"><use href="#i-paste"/></svg><span class="tsep"></span><svg class="ms-2" width="16" height="16"><use href="#i-peng"/></svg><svg class="g10" width="16" height="16"><use href="#i-tag"/></svg><svg class="g10" width="16" height="16"><use href="#i-xg"/></svg><span class="tsep"></span><svg class="ms-2" width="16" height="16"><use href="#i-ref"/></svg><span class="tsep"></span><svg class="ms-2" width="13" height="16"><use href="#i-trash"/></svg><span class="graytx tbtxt g6">Clear All</span>
      </div>
      <div class="lowwhite"></div>
     </div>
     <div class="gsplit"><div class="dotv"></div><div class="dotv"></div><div class="dotv"></div><div class="dotv"></div></div>
     <div class="rpane">
      <div class="tb-sub tb-r d-flex align-items-center">
       <svg width="16" height="16"><use href="#i-plus"/></svg><svg class="g10" width="16" height="16"><use href="#i-x"/></svg><span class="tsep"></span><svg class="ms-2" width="16" height="16"><use href="#i-ref"/></svg><span class="tsep"></span><svg class="ms-2" width="16" height="16"><use href="#i-updn"/></svg><span class="tsep"></span><svg class="ms-2" width="16" height="16"><use href="#i-col"/></svg><span class="tsep"></span><svg class="ms-2" width="16" height="16"><use href="#i-abs"/></svg><span class="tbtxt wabs ms-1">Absolute Values</span><span class="tsep"></span><svg class="ms-2" width="16" height="16"><use href="#i-rw"/></svg><span class="tsep"></span><svg class="ms-2" width="17" height="17"><use href="#i-edit"/></svg><span class="tbtxt ms-1">Edit Values</span>
      </div>
      <div class="searchbox d-flex align-items-center"><input class="form-control qinput qinput-r" placeholder="Enter text to search..."><button class="btn qfind">Find</button></div>
      <div class="gridwrap rgrid">
       <table class="table qgrid qgrid-r"><colgroup><col class="d0"><col class="d1"><col class="d2"><col class="d3"><col class="d4"><col class="d5"><col class="d6"><col class="d7"><col class="d8"><col class="d9"><col class="d10"><col class="d11"><col class="d12"></colgroup>
        <thead><tr><th></th><th>Code</th><th>Measurement</th><th>Description</th><th>SubModule</th><th>Tolerance</th><th class="nbh">NB</th><th>XS</th><th>S</th><th>M</th><th>L</th><th>XL</th><th></th></tr></thead>
        <tbody>
        <tr><td class="ind"></td><td class="cod"><div class="d-flex justify-content-between"><span class="codetx">A</span><span class="penbtn d-flex align-items-center justify-content-center"><svg width="16" height="16"><use href="#i-pen"/></svg></span></div></td><td class="ro">WAIST CIRCUMFERENCE TOTAL : RELAXED</td><td class="ed">ELASTIC OVER 1.5"</td><td class="ro">BOTTOM</td><td class="ed num">0.250</td><td class="nbc"><svg class="mx-auto" width="13" height="13"><use href="#i-unc"/></svg></td><td class="sz">-1.500</td><td class="szs">0.000</td><td class="sz">1.500</td><td class="sz">1.500</td><td class="sz">2.000</td><td class="fill"></td></tr>
        <tr class="sel"><td class="ind"><svg class="mx-auto" width="7" height="11" viewBox="0 0 7 11"><path d="M1 .5h5M3.500 .5v10M1 10.500h5" stroke="#222" fill="none"/></svg></td><td class="cod"><div class="d-flex justify-content-between"><span class="codetx">C</span><span class="penbtn d-flex align-items-center justify-content-center"><svg width="16" height="16"><use href="#i-pen"/></svg></span></div></td><td class="ro">WAISTBAND HEIGHT</td><td class="ed">Additional Descriptions</td><td class="ro foc">BOTTOM</td><td class="ed num">0.125</td><td class="ed nbc"><svg class="mx-auto" width="13" height="13"><use href="#i-uns"/></svg></td><td class="sz">0.000</td><td class="szs">0.000</td><td class="sz">0.000</td><td class="sz">0.000</td><td class="sz">0.000</td><td class="fill"></td></tr>
        <tr><td class="ind"></td><td class="cod"><div class="d-flex justify-content-between"><span class="codetx">D</span><span class="penbtn d-flex align-items-center justify-content-center"><svg width="16" height="16"><use href="#i-pen"/></svg></span></div></td><td class="ro">FRONT RISE : FROM TOP EDGE</td><td class="ed"></td><td class="ro">BOTTOM</td><td class="ed num">0.125</td><td class="nbc"><svg class="mx-auto" width="13" height="13"><use href="#i-unc"/></svg></td><td class="sz">-0.500</td><td class="szs">0.000</td><td class="sz">0.500</td><td class="sz">0.500</td><td class="sz">0.750</td><td class="fill"></td></tr>
        <tr><td class="ind"></td><td class="cod"><div class="d-flex justify-content-between"><span class="codetx">F</span><span class="penbtn d-flex align-items-center justify-content-center"><svg width="16" height="16"><use href="#i-pen"/></svg></span></div></td><td class="ro">BACK RISE : FROM TOP EDGE</td><td class="ed"></td><td class="ro">BOTTOM</td><td class="ed num">0.125</td><td class="nbc"><svg class="mx-auto" width="13" height="13"><use href="#i-unc"/></svg></td><td class="sz">-0.500</td><td class="szs">0.000</td><td class="sz">0.500</td><td class="sz">0.500</td><td class="sz">0.750</td><td class="fill"></td></tr>
        <tr><td class="ind"></td><td class="cod"><div class="d-flex justify-content-between"><span class="codetx">G</span><span class="penbtn d-flex align-items-center justify-content-center"><svg width="16" height="16"><use href="#i-pen"/></svg></span></div></td><td class="ro">INSEAM</td><td class="ed"></td><td class="ro">BOTTOM</td><td class="ed num">0.250</td><td class="nbc"><svg class="mx-auto" width="13" height="13"><use href="#i-unc"/></svg></td><td class="sz">0.000</td><td class="szs">0.000</td><td class="sz">5.000</td><td class="sz">0.000</td><td class="sz">0.000</td><td class="fill"></td></tr>
        <tr><td class="ind"></td><td class="cod"><div class="d-flex justify-content-between"><span class="codetx">H</span><span class="penbtn d-flex align-items-center justify-content-center"><svg width="16" height="16"><use href="#i-pen"/></svg></span></div></td><td class="ro">OUTSEAM : FROM TOP EDGE</td><td class="ed"></td><td class="ro">BOTTOM</td><td class="ed num">0.250</td><td class="nbc"><svg class="mx-auto" width="13" height="13"><use href="#i-unc"/></svg></td><td class="sz">-0.500</td><td class="szs">0.000</td><td class="sz">0.500</td><td class="sz">0.500</td><td class="sz">0.750</td><td class="fill"></td></tr>
        <tr><td class="ind"></td><td class="cod"><div class="d-flex justify-content-between"><span class="codetx">I</span><span class="penbtn d-flex align-items-center justify-content-center"><svg width="16" height="16"><use href="#i-pen"/></svg></span></div></td><td class="ro">HIP : FLAT 8" BELOW TOP EDGE</td><td class="ed"></td><td class="ro">BOTTOM</td><td class="ed num">0.250</td><td class="nbc"><svg class="mx-auto" width="13" height="13"><use href="#i-unc"/></svg></td><td class="sz">-1.000</td><td class="szs">0.000</td><td class="sz">1.000</td><td class="sz">1.000</td><td class="sz">1.250</td><td class="fill"></td></tr>
        <tr><td class="ind"></td><td class="cod"><div class="d-flex justify-content-between"><span class="codetx">J</span><span class="penbtn d-flex align-items-center justify-content-center"><svg width="16" height="16"><use href="#i-pen"/></svg></span></div></td><td class="ro">THIGH : FLAT 1" BELOW CROTCH</td><td class="ed"></td><td class="ro">BOTTOM</td><td class="ed num">0.125</td><td class="nbc"><svg class="mx-auto" width="13" height="13"><use href="#i-unc"/></svg></td><td class="sz">-0.500</td><td class="szs">0.000</td><td class="sz">0.500</td><td class="sz">0.500</td><td class="sz">0.625</td><td class="fill"></td></tr>
        <tr><td class="ind"></td><td class="cod"><div class="d-flex justify-content-between"><span class="codetx">K</span><span class="penbtn d-flex align-items-center justify-content-center"><svg width="16" height="16"><use href="#i-pen"/></svg></span></div></td><td class="ro">LEG OPENING : FLAT @ EDGE</td><td class="ed"></td><td class="ro">BOTTOM</td><td class="ed num">0.125</td><td class="nbc"><svg class="mx-auto" width="13" height="13"><use href="#i-unc"/></svg></td><td class="sz">-0.500</td><td class="szs">0.000</td><td class="sz">0.500</td><td class="sz">0.500</td><td class="sz">0.625</td><td class="fill"></td></tr>
        <tr><td class="ind"></td><td class="cod"><div class="d-flex justify-content-between"><span class="codetx">L</span><span class="penbtn d-flex align-items-center justify-content-center"><svg width="16" height="16"><use href="#i-pen"/></svg></span></div></td><td class="ro">FT POCKET PLACEMENT FROM TOP OF WB</td><td class="ed"></td><td class="ro">BOTTOM</td><td class="ed num">0.125</td><td class="nbc"><svg class="mx-auto" width="13" height="13"><use href="#i-unc"/></svg></td><td class="sz">0.000</td><td class="szs">0.000</td><td class="sz">0.000</td><td class="sz">0.000</td><td class="sz">0.000</td><td class="fill"></td></tr>
        <tr><td class="ind"></td><td class="cod"><div class="d-flex justify-content-between"><span class="codetx">M</span><span class="penbtn d-flex align-items-center justify-content-center"><svg width="16" height="16"><use href="#i-pen"/></svg></span></div></td><td class="ro">FT POCKET OPENING</td><td class="ed"></td><td class="ro">BOTTOM</td><td class="ed num">0.125</td><td class="nbc"><svg class="mx-auto" width="13" height="13"><use href="#i-unc"/></svg></td><td class="sz">0.000</td><td class="szs">0.000</td><td class="sz">5.000</td><td class="sz">0.000</td><td class="sz">0.000</td><td class="fill"></td></tr>
        <tr><td class="ind"></td><td class="cod"><div class="d-flex justify-content-between"><span class="codetx">N</span><span class="penbtn d-flex align-items-center justify-content-center"><svg width="16" height="16"><use href="#i-pen"/></svg></span></div></td><td class="ro">FT POCKET BAG WIDTH @ WB</td><td class="ed"></td><td class="ro">BOTTOM</td><td class="ed num">0.125</td><td class="nbc"><svg class="mx-auto" width="13" height="13"><use href="#i-unc"/></svg></td><td class="sz">0.000</td><td class="szs">0.000</td><td class="sz">0.000</td><td class="sz">0.000</td><td class="sz">0.000</td><td class="fill"></td></tr>
        <tr><td class="ind"></td><td class="cod"><div class="d-flex justify-content-between"><span class="codetx">O</span><span class="penbtn d-flex align-items-center justify-content-center"><svg width="16" height="16"><use href="#i-pen"/></svg></span></div></td><td class="ro">BK POCKET OPENING</td><td class="ed"></td><td class="ro">BOTTOM</td><td class="ed num">0.125</td><td class="nbc"><svg class="mx-auto" width="13" height="13"><use href="#i-unc"/></svg></td><td class="sz">0.000</td><td class="szs">0.000</td><td class="sz">5.000</td><td class="sz">0.000</td><td class="sz">0.000</td><td class="fill"></td></tr>
        <tr><td class="ind"></td><td class="cod"><div class="d-flex justify-content-between"><span class="codetx">P</span><span class="penbtn d-flex align-items-center justify-content-center"><svg width="16" height="16"><use href="#i-pen"/></svg></span></div></td><td class="ro">BK POCKET LENGTH</td><td class="ed"></td><td class="ro">BOTTOM</td><td class="ed num">0.125</td><td class="nbc"><svg class="mx-auto" width="13" height="13"><use href="#i-unc"/></svg></td><td class="sz">0.000</td><td class="szs">0.000</td><td class="sz">0.000</td><td class="sz">0.000</td><td class="sz">0.000</td><td class="fill"></td></tr>
        <tr><td class="ind"></td><td class="cod"><div class="d-flex justify-content-between"><span class="codetx">Q</span><span class="penbtn d-flex align-items-center justify-content-center"><svg width="16" height="16"><use href="#i-pen"/></svg></span></div></td><td class="ro">BK POCKET PLACEMENT FROM CTR TO TOP OF WB</td><td class="ed"></td><td class="ro">BOTTOM</td><td class="ed num">0.125</td><td class="nbc"><svg class="mx-auto" width="13" height="13"><use href="#i-unc"/></svg></td><td class="sz">0.000</td><td class="szs">0.000</td><td class="sz">5.000</td><td class="sz">0.000</td><td class="sz">0.000</td><td class="fill"></td></tr>
        <tr><td class="ind"></td><td class="cod"><div class="d-flex justify-content-between"><span class="codetx">R</span><span class="penbtn d-flex align-items-center justify-content-center"><svg width="16" height="16"><use href="#i-pen"/></svg></span></div></td><td class="ro">DRAWCORD WIDTH</td><td class="ed"></td><td class="ro">BOTTOM</td><td class="ed num">0.125</td><td class="nbc"><svg class="mx-auto" width="13" height="13"><use href="#i-unc"/></svg></td><td class="sz">0.000</td><td class="szs">0.000</td><td class="sz">0.000</td><td class="sz">0.000</td><td class="sz">0.000</td><td class="fill"></td></tr>
        <tr><td class="ind"></td><td class="cod"><div class="d-flex justify-content-between"><span class="codetx">S</span><span class="penbtn d-flex align-items-center justify-content-center"><svg width="16" height="16"><use href="#i-pen"/></svg></span></div></td><td class="ro">DRAWCORD LENGTH</td><td class="ed"></td><td class="ro">BOTTOM</td><td class="ed num">0.250</td><td class="nbc"><svg class="mx-auto" width="13" height="13"><use href="#i-unc"/></svg></td><td class="sz">-2.000</td><td class="szs">0.000</td><td class="sz">2.000</td><td class="sz">2.000</td><td class="sz">2.500</td><td class="fill"></td></tr>
        </tbody></table>
       <svg class="mousep position-absolute" width="12" height="19" viewBox="0 0 12 19"><path d="M1 1v14l3.500-3 2.500 6 2-1-2.500-5.500H11z" fill="#000" stroke="#fff" stroke-width=".7"/></svg>
      </div>
      <div class="ftbar d-flex align-items-center justify-content-end"><div class="hlbtn hlfind d-flex align-items-center"><svg class="me-1" width="18" height="18"><use href="#i-mag2"/></svg><span class="tbtxt">Find</span></div><svg class="g6" width="17" height="17"><use href="#i-tot"/></svg><span class="tbtxt wtot ms-1">Totals</span><svg class="g10" width="17" height="17"><use href="#i-exp"/></svg><span class="tbtxt wexp ms-1">Export</span></div>
     </div>
    </div>
   </div>
  </div>
  <div class="railtab d-flex flex-column align-items-center"><svg width="17" height="17"><use href="#i-pingreen"/></svg><span class="vtxt">Pinned</span></div>
 </div>
 <div class="statusbar d-flex align-items-center justify-content-end">
  <span class="vsep"></span><span class="stt st1">Leset</span><span class="vsep"></span><span class="stt st2 fw-bold">7.3.1.2</span><span class="vsep"></span><span class="stt st3 d-flex align-items-center"><svg class="me-1" width="16" height="17"><use href="#i-user"/></svg>Isync-imp</span><span class="vsep"></span><span class="stt st4 d-flex align-items-center"><svg class="me-1" width="15" height="16"><use href="#i-shield"/></svg>Administrator<svg class="ms-auto me-1" width="10" height="10" viewBox="0 0 10 10"><path d="M8 1h2v2H8zM5 4h2v2H5zM8 4h2v2H8zM2 7h2v2H2zM5 7h2v2H5zM8 7h2v2H8z" fill="#92a6c0"/></svg></span>
 </div>
</div>
</body></html>
